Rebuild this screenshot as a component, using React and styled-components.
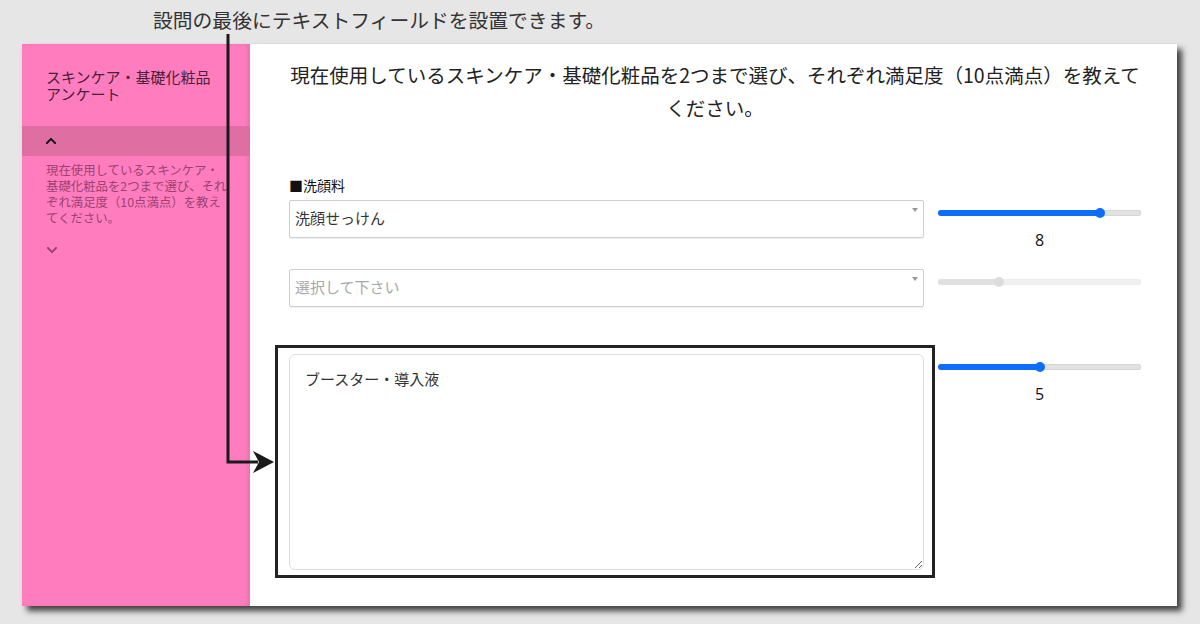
import React from 'react';
import styled, { createGlobalStyle } from 'styled-components';
import { FaChevronUp, FaChevronDown } from 'react-icons/fa';

const GlobalStyle = createGlobalStyle`
  html, body {
    margin: 0;
    padding: 0;
    background: #e6e6e6;
  }
  body {
    font-family: 'Noto Sans CJK JP', 'Noto Sans', sans-serif;
    color: #222;
  }
`;

const Stage = styled.div`
  position: relative;
  width: 1200px;
  height: 624px;
  padding: 44px 0 0 22px;
  box-sizing: border-box;
  overflow: hidden;
`;

const Window = styled.div`
  width: 1155px;
  height: 562px;
  display: flex;
  background: #fff;
  box-shadow: 5px 5px 6px rgba(0, 0, 0, 0.72);
`;

const Sidebar = styled.aside`
  width: 228px;
  flex-shrink: 0;
  background: #ff7dbe;
  box-shadow: inset -3px 0 4px rgba(0, 0, 0, 0.08);
  padding-top: 24px;
  box-sizing: border-box;
`;

const SideTitle = styled.div`
  padding-left: 24px;
  font-size: 15px;
  line-height: 17px;
  color: #4a1f37;
`;

const SideItem = styled.div`
  margin-top: 24px;
  height: 30px;
  background: ${(p) => (p.$active ? '#df6ea3' : 'transparent')};
  display: flex;
  align-items: center;
  padding-left: 23px;
  color: #111;
`;

const SideText = styled.p`
  margin: 6px 0 0;
  padding-left: 24px;
  width: 184px;
  font-size: 12.4px;
  line-height: 16px;
  color: #9a4274;
`;

const SideToggle = styled.div`
  margin-top: 18px;
  padding-left: 24px;
  color: #9a4274;
  display: flex;
`;

const Main = styled.main`
  flex: 1;
  padding: 14px 36px 0 39px;
`;

const Question = styled.h1`
  margin: 0;
  font-size: 19.5px;
  font-weight: 400;
  line-height: 33px;
  text-align: center;
  white-space: nowrap;
  color: #222;
`;

const Label = styled.div`
  margin-top: 53px;
  font-size: 14px;
  line-height: 16px;
  color: #111;
`;

const Row = styled.div`
  display: grid;
  grid-template-columns: 635px 203px;
  column-gap: 14px;
  align-items: start;
  margin-top: ${(p) => p.$gap}px;
`;

const Select = styled.div`
  position: relative;
  height: 38px;
  box-sizing: border-box;
  border: 1px solid #cfcfcf;
  border-radius: 2px;
  box-shadow: 0 1px 1px rgba(0, 0, 0, 0.06);
  display: flex;
  align-items: center;
  padding: 0 0 4px 5px;
  font-size: 15px;
  color: ${(p) => (p.$placeholder ? '#a8a8a8' : '#333')};

  &::after {
    content: '';
    position: absolute;
    right: 5px;
    top: 7px;
    border-left: 3px solid transparent;
    border-right: 3px solid transparent;
    border-top: 4px solid #999;
  }
`;

const TextArea = styled.textarea`
  width: 635px;
  height: 216px;
  box-sizing: border-box;
  border: 1px solid #dedede;
  border-radius: 6px;
  padding: 14px 15px;
  font-family: 'Noto Sans CJK JP', 'Noto Sans', sans-serif;
  font-size: 15px;
  line-height: 20px;
  color: #333;
  resize: both;
  outline: none;
`;

const SliderCol = styled.div`
  padding-top: 10px;
`;

const Track = styled.div`
  position: relative;
  height: 6px;
  border-radius: 3px;
  background: ${(p) => (p.$disabled ? '#f0f0f0' : '#e2e2e2')};
  box-shadow: inset 0 0 0 1px ${(p) => (p.$disabled ? '#ececec' : '#d6d6d6')};
`;

const Fill = styled.div`
  position: absolute;
  left: 0;
  top: 0;
  bottom: 0;
  border-radius: 3px;
  background: ${(p) => (p.$disabled ? '#e0e0e0' : '#0d6efd')};
`;

const Thumb = styled.div`
  position: absolute;
  top: 50%;
  width: 10px;
  height: 10px;
  margin: -5px 0 0 -5px;
  border-radius: 50%;
  background: ${(p) => (p.$disabled ? '#dcdcdc' : '#0d6efd')};
`;

const Value = styled.div`
  margin-top: 15px;
  text-align: center;
  font-family: 'Open Sans', 'Noto Sans', sans-serif;
  font-size: 16px;
  line-height: 18px;
  color: #111;
`;

const Note = styled.div`
  position: absolute;
  left: 153px;
  top: 8px;
  font-size: 19.8px;
  line-height: 24px;
  color: #333;
  white-space: nowrap;
`;

const Highlight = styled.div`
  position: absolute;
  left: 275px;
  top: 345px;
  width: 660px;
  height: 233px;
  box-sizing: border-box;
  border: 3px solid #222;
`;

const Arrow = styled.svg`
  position: absolute;
  left: 0;
  top: 0;
  pointer-events: none;
`;

function Slider({ value, disabled, showValue = true }) {
  const pct = `${value * 10}%`;
  return (
    <SliderCol>
      <Track $disabled={disabled}>
        <Fill $disabled={disabled} style={{ width: pct }} />
        <Thumb $disabled={disabled} style={{ left: pct }} />
      </Track>
      {showValue && <Value>{value}</Value>}
    </SliderCol>
  );
}

export default function App() {
  return (
    <Stage>
      <GlobalStyle />
      <Window>
        <Sidebar>
          <SideTitle>
            スキンケア・基礎化粧品
            <br />
            アンケート
          </SideTitle>
          <SideItem $active>
            <FaChevronUp size={12} />
          </SideItem>
          <SideText>
            現在使用しているスキンケア・基礎化粧品を2つまで選び、それぞれ満足度（10点満点）を教えてください。
          </SideText>
          <SideToggle>
            <FaChevronDown size={12} />
          </SideToggle>
        </Sidebar>
        <Main>
          <Question>
            現在使用しているスキンケア・基礎化粧品を2つまで選び、それぞれ満足度（10点満点）を教えて
            <br />
            ください。
          </Question>
          <Label>■洗顔料</Label>
          <Row $gap={7}>
            <Select>洗顔せっけん</Select>
            <Slider value={8} />
          </Row>
          <Row $gap={20}>
            <Select $placeholder>選択して下さい</Select>
            <Slider value={3} disabled showValue={false} />
          </Row>
          <Row $gap={47}>
            <TextArea readOnly defaultValue="ブースター・導入液" />
            <Slider value={5} />
          </Row>
        </Main>
      </Window>

      <Note>設問の最後にテキストフィールドを設置できます。</Note>
      <Highlight />
      <Arrow width="1200" height="624" viewBox="0 0 1200 624">
        <polyline points="228,34 228,462 258,462" fill="none" stroke="#1a1a1a" strokeWidth="3" />
        <polygon points="274,462 253,451 259,462 253,473" fill="#1a1a1a" />
      </Arrow>
    </Stage>
  );
}
